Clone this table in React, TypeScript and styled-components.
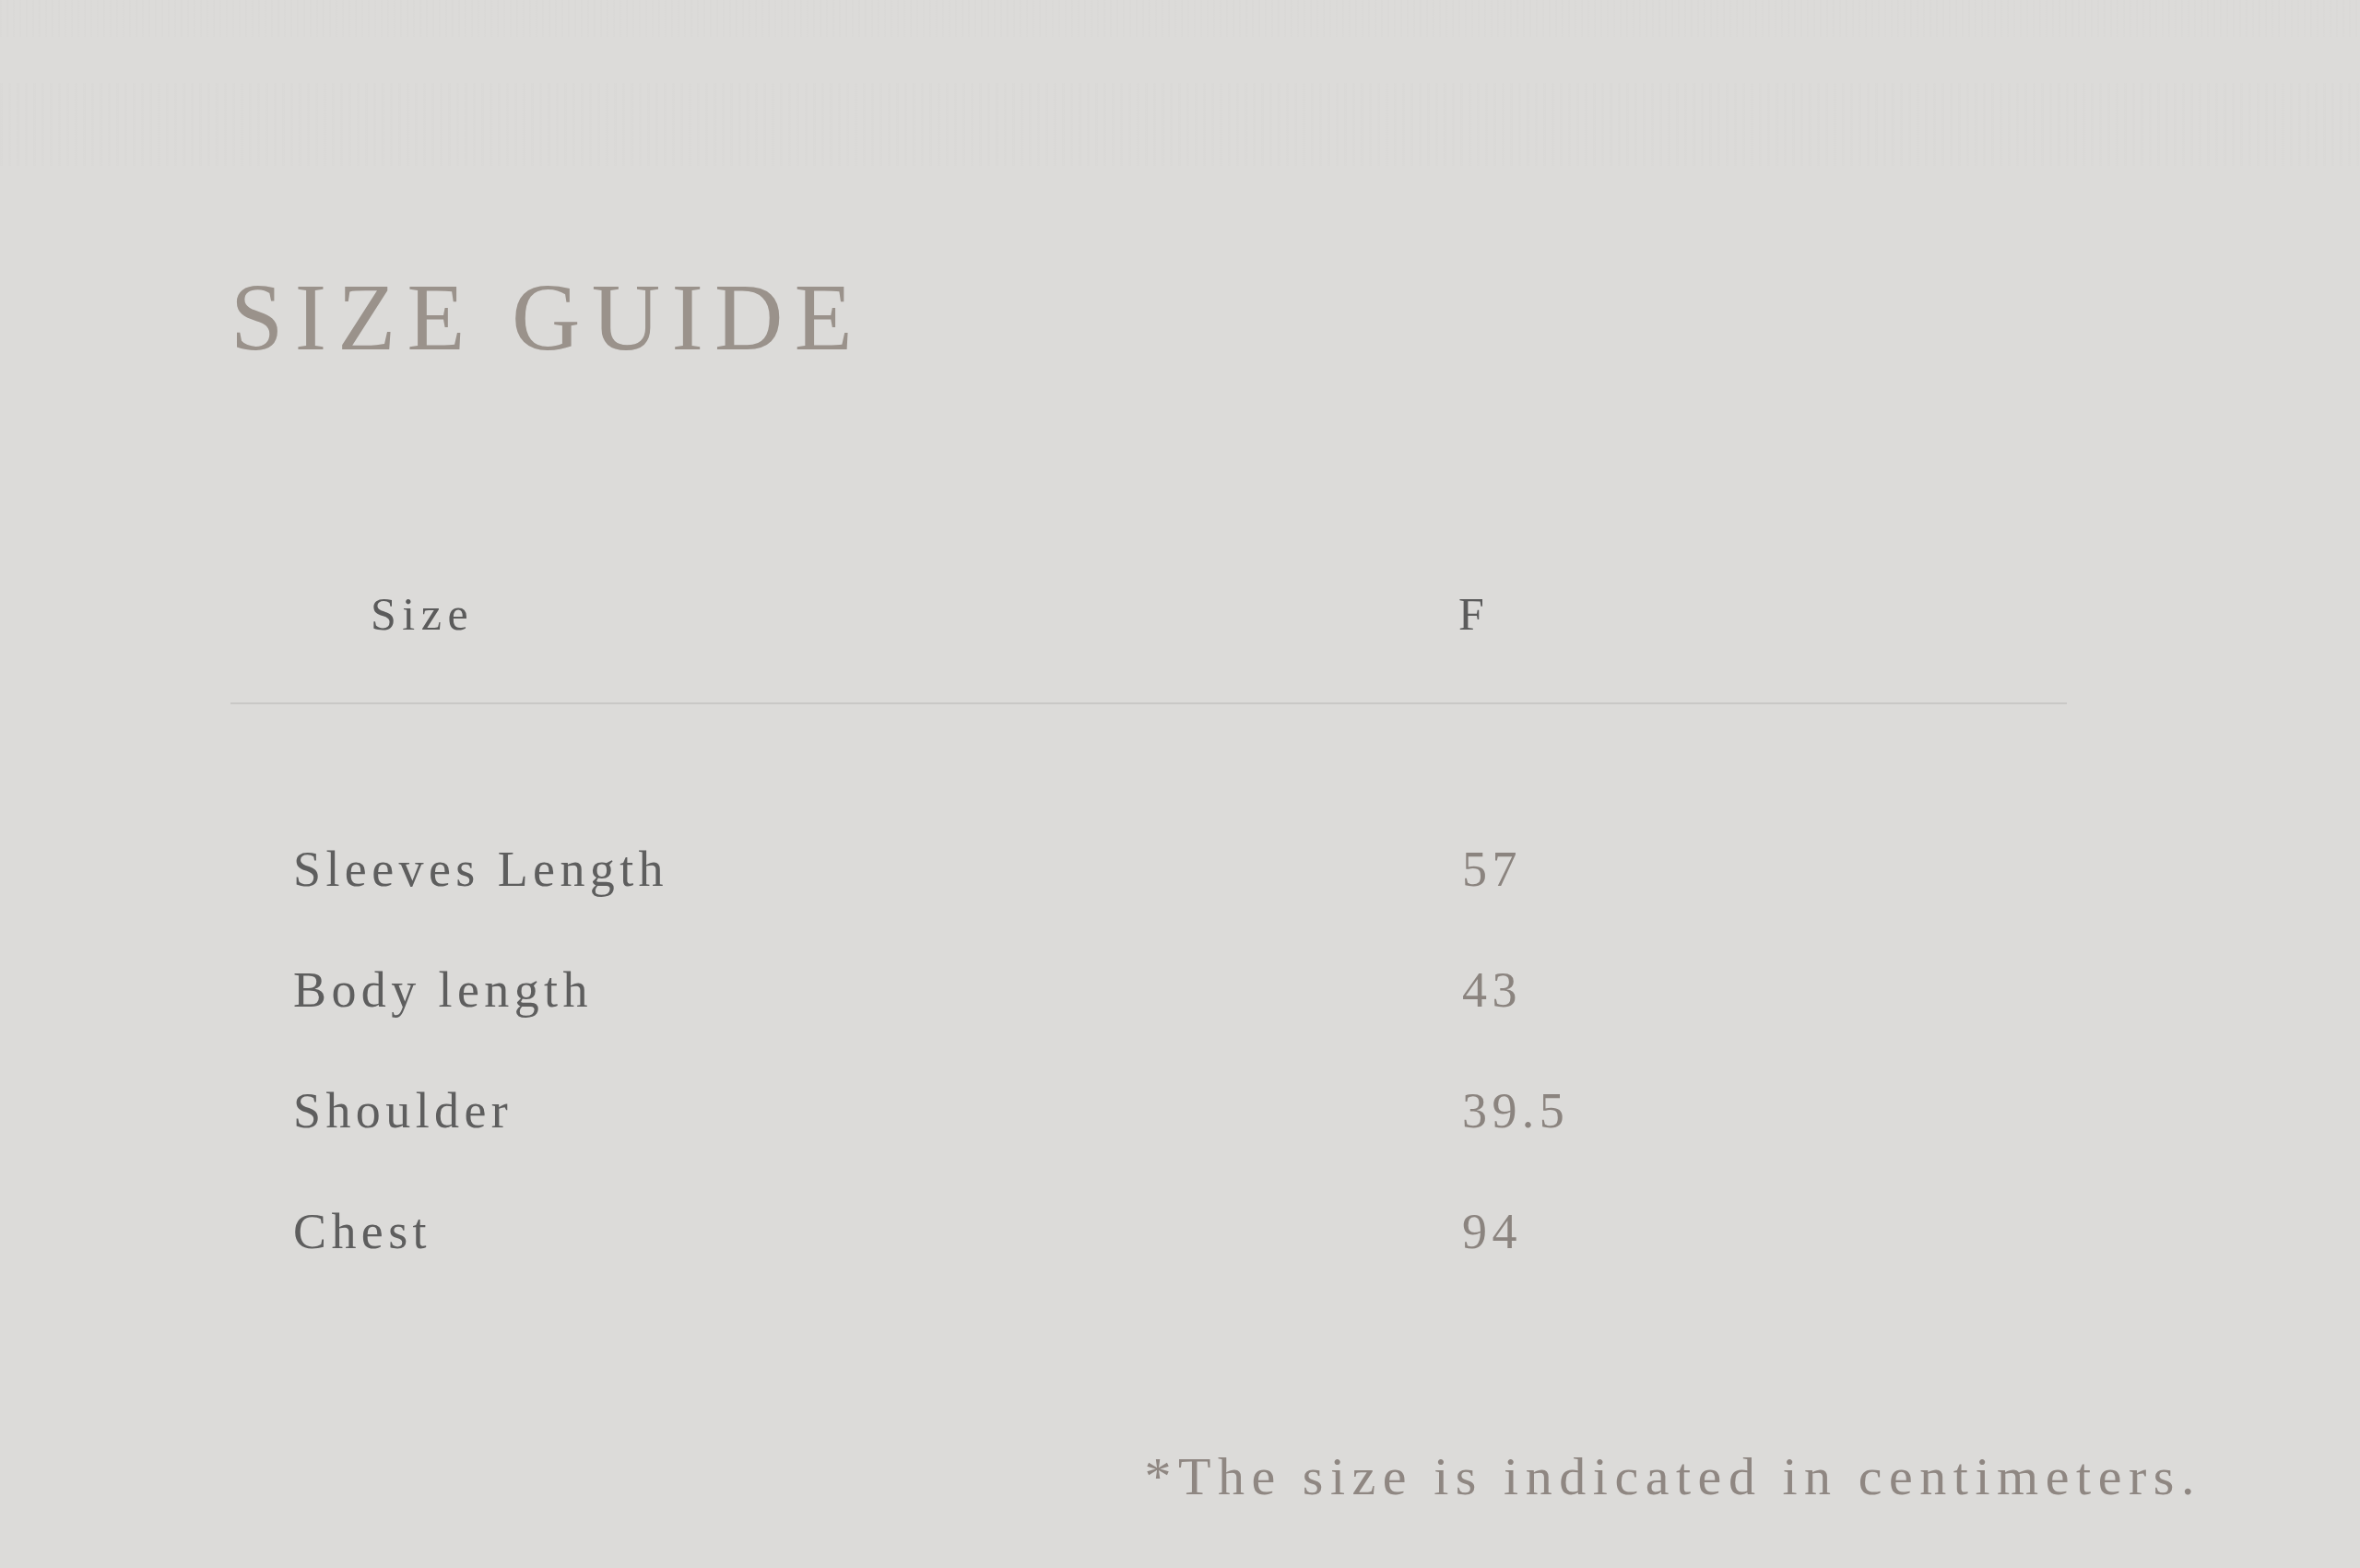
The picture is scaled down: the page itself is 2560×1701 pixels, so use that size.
import {memo} from 'react'
import styled, {createGlobalStyle} from 'styled-components'

const GlobalStyle = createGlobalStyle`
  html, body {
    margin: 0;
    padding: 0;
    background: #dcdbd9;
  }
  body {
    font-family: 'Liberation Serif', 'Times New Roman', serif;
  }
`

type Measure = {label: string; value: string}

const measures: Measure[] = [
  {label: 'Sleeves Length', value: '57'},
  {label: 'Body length', value: '43'},
  {label: 'Shoulder', value: '39.5'},
  {label: 'Chest', value: '94'},
]

const SizeGuide = () => {
  return (
    <Page>
      <GlobalStyle />
      <Title>SIZE GUIDE</Title>
      <Table>
        <HeadRow>
          <HeadCell>Size</HeadCell>
          <HeadCell>F</HeadCell>
        </HeadRow>
        <Body>
          {measures.map(m => (
            <DataRow key={m.label}>
              <Label>{m.label}</Label>
              <Value>{m.value}</Value>
            </DataRow>
          ))}
        </Body>
      </Table>
      <Note>*The size is indicated in centimeters.</Note>
    </Page>
  )
}

export default memo(SizeGuide)

const Page = styled.main`
  box-sizing: border-box;
  width: 2560px;
  min-height: 1701px;
  padding: 293px 0 0 250px;
  background-color: #dcdbd9;
  background-image: repeating-linear-gradient(
      90deg,
      rgba(0, 0, 0, 0.007) 0 2px,
      transparent 2px 7px
    ),
    repeating-linear-gradient(
      90deg,
      rgba(0, 0, 0, 0.006) 0 3px,
      transparent 3px 9px
    );
  background-size: 100% 40px, 100% 90px;
  background-position: 0 0, 0 90px;
  background-repeat: no-repeat;
`

const Title = styled.h1`
  margin: 0;
  font-family: 'Liberation Serif', 'Times New Roman', serif;
  font-weight: 400;
  font-size: 103px;
  line-height: 1;
  letter-spacing: 0.12em;
  color: #9a928b;
`

const Table = styled.section`
  width: 1992px;
  margin-top: 245px;
`

const HeadRow = styled.div`
  display: grid;
  grid-template-columns: 1180px 1fr;
  padding: 0 0 71px 152px;
  border-bottom: 2px solid #c9c8c6;
`

const HeadCell = styled.div`
  font-size: 50px;
  line-height: 1;
  letter-spacing: 0.13em;
  color: #5b5b5b;
`

const Body = styled.div`
  display: flex;
  flex-direction: column;
  gap: 77px;
  padding: 152px 0 0 68px;
`

const DataRow = styled.div`
  display: grid;
  grid-template-columns: 1268px 1fr;
  font-size: 54px;
  line-height: 1;
  letter-spacing: 0.1em;
`

const Label = styled.div`
  color: #5e5e5e;
`

const Value = styled.div`
  color: #8b847f;
`

const Note = styled.p`
  margin: 210px 0 0;
  padding-right: 172px;
  text-align: right;
  font-size: 58px;
  line-height: 1;
  letter-spacing: 0.13em;
  color: #8f8782;
`
